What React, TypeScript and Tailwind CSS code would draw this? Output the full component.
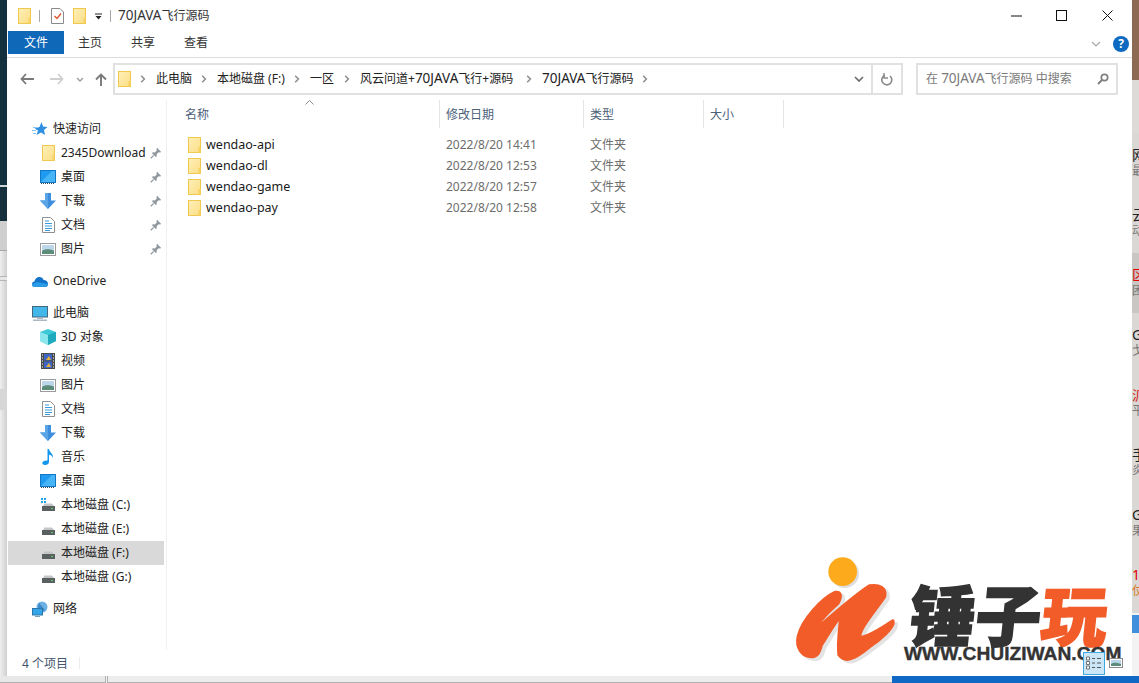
import React from "react";

const Folder = ({ className = "" }: { className?: string }) => (
  <svg width="13" height="16" viewBox="0 0 13 16" className={`shrink-0 ${className}`}>
    <defs>
      <linearGradient id="fg" x1="0" y1="0" x2="1" y2="1">
        <stop offset="0" stopColor="#fff0b8" />
        <stop offset="1" stopColor="#fbdd85" />
      </linearGradient>
    </defs>
    <rect x="0.5" y="0.5" width="12" height="15" fill="url(#fg)" stroke="#efc94f" />
    <rect x="10.5" y="10" width="2" height="5.5" fill="#f5d262" />
  </svg>
);

const Pin = () => (
  <svg width="12" height="12" viewBox="0 0 12 12" className="shrink-0">
    <path d="M7 0.8 11.2 5 10 5.6 8.6 5.2 6.6 7.2 6.8 9.2 5.8 10 2 6.2 2.8 5.2 4.8 5.4 6.8 3.4 6.4 2z" fill="#8f979e" />
    <path d="M3.6 8.4 0.8 11.2" stroke="#8f979e" strokeWidth="1.3" />
  </svg>
);

const Star = () => (
  <svg width="16" height="16" viewBox="0 0 16 16">
    <path d="M9.5 1 11 5.5 15.5 6 12 9 13 14 9 11.5 4.5 14 6 9.5 2.5 7.5 7.5 6z" fill="#2f8fe0" />
    <path d="M1 6.5H5M0 9.5H4M1 12.5H4" stroke="#8cc4ef" strokeWidth="1" />
  </svg>
);
const Desktop = () => (
  <svg width="16" height="14" viewBox="0 0 16 14">
    <rect x="0.5" y="0.5" width="15" height="12" fill="#1e9bf0" stroke="#1277c4" />
    <path d="M1 12 12 1H15V12z" fill="#46b4f6" />
    <path d="M1 13.5H15" stroke="#3c4a56" strokeDasharray="1 1" />
  </svg>
);
const Down = () => (
  <svg width="16" height="16" viewBox="0 0 16 16">
    <path d="M5 0H11V7.5H16L8 16 0 7.5H5z" fill="#3d8fdc" />
    <path d="M5 0H8V16L0 7.5H5z" fill="#5aa5e8" />
  </svg>
);
const Doc = () => (
  <svg width="13" height="16" viewBox="0 0 13 16">
    <path d="M0.5 0.5H8.5L12.5 4.5V15.5H0.5z" fill="#fff" stroke="#8f8f8f" />
    <path d="M3 4H7M3 6.5H10M3 9H10M3 11.5H10M3 13.5H8" stroke="#3a9ad9" strokeWidth="1" />
  </svg>
);
const Pic = () => (
  <svg width="16" height="13" viewBox="0 0 16 13">
    <rect x="0.5" y="0.5" width="15" height="12" fill="#fff" stroke="#9a9a9a" />
    <rect x="2" y="2" width="12" height="9" fill="#bcd6ea" />
    <path d="M2 8C5 5.5 9 6 14 7.5V11H2z" fill="#5d8c78" />
  </svg>
);
const Cloud = () => (
  <svg width="16" height="11" viewBox="0 0 16 11">
    <path d="M3 11C1 11 0 9.6 0 8.2 0 6.8 1 5.8 2.4 5.6 3 3 4.8 1 7.4 1 9.4 1 11 2.2 11.6 4 14 4 16 5.6 16 8 16 9.8 14.8 11 13 11z" fill="#1273c8" />
    <path d="M3 11C1 11 0 9.6 0 8.2L5 6 16 8C16 9.8 14.8 11 13 11z" fill="#2a9be6" />
  </svg>
);
const Monitor = () => (
  <svg width="16" height="15" viewBox="0 0 16 15">
    <rect x="0.5" y="0.5" width="15" height="10.5" fill="#43b7ea" stroke="#44677f" />
    <path d="M5 12H11V13H5zM1 13.5H15V15H1z" fill="#a9b8c2" />
  </svg>
);
const Cube = () => (
  <svg width="16" height="16" viewBox="0 0 16 16">
    <path d="M8 0 16 3V12L8 16 0 12V3z" fill="#3dc8d8" />
    <path d="M0 3 8 6V16L0 12z" fill="#8ae6ec" />
    <path d="M8 6 16 3V12L8 16z" fill="#1faabd" />
  </svg>
);
const Film = () => (
  <svg width="14" height="16" viewBox="0 0 14 16">
    <rect width="14" height="16" fill="#4b4b4b" />
    <rect x="3" y="1" width="8" height="6.5" fill="#3f66c5" />
    <rect x="3" y="8.5" width="8" height="6.5" fill="#3f66c5" />
    <path d="M5 7 8 3 10 7zM5 14 8 10 10 14z" fill="#e8b23a" />
    <path d="M1 2H2M1 5H2M1 8H2M1 11H2M1 14H2M12 2H13M12 5H13M12 8H13M12 11H13M12 14H13" stroke="#fff" />
  </svg>
);
const Music = () => (
  <svg width="12" height="16" viewBox="0 0 12 16">
    <path d="M5.5 0H7C7.2 3 11.5 4.5 11 9 10 6.5 8.5 6 7 5.5V13C7 15 5 16 3 16 1.4 16 0.3 15.2 0.3 14 0.3 12.3 3 11 5.5 11.5z" fill="#1397ea" />
  </svg>
);
const Drive = ({ win = false }: { win?: boolean }) => (
  <svg width="14" height="14" viewBox="0 0 14 14">
    {win && <path d="M0 0H2V2H0zM3 0H5V2H3zM0 3H2V5H0zM3 3H5V5H3z" fill="#1fa4ee" />}
    <path d="M2 8 3.5 5.5H11L13 8z" fill="#c5c5c5" />
    <rect x="1" y="8" width="13" height="5" fill="#5a5f62" />
    <rect x="10" y="10" width="2" height="1" fill="#5cd05c" />
  </svg>
);
const Net = () => (
  <svg width="16" height="16" viewBox="0 0 16 16">
    <circle cx="10" cy="6" r="5.5" fill="#6cb0e4" />
    <path d="M7 2 13 9 9 11 6 6z" fill="#3c86c8" />
    <rect x="0.5" y="7.5" width="10" height="6.5" fill="#33a5e8" stroke="#2c76aa" />
    <path d="M3 15.5H8" stroke="#7aa0ba" />
  </svg>
);
const Chev = () => (
  <svg width="6" height="8" viewBox="0 0 6 8" className="shrink-0">
    <path d="M1.2 0.8 4.4 4 1.2 7.2" fill="none" stroke="#8c8c8c" strokeWidth="1.5" />
  </svg>
);

const J = () => <span className="text-[13.5px]">70JAVA</span>;

type Item = { icon: React.ReactNode; label: string; pin?: boolean; top?: boolean; sel?: boolean };
const groups: Item[][] = [
  [
    { icon: <Star />, label: "快速访问", top: true },
    { icon: <Folder />, label: "2345Download", pin: true },
    { icon: <Desktop />, label: "桌面", pin: true },
    { icon: <Down />, label: "下载", pin: true },
    { icon: <Doc />, label: "文档", pin: true },
    { icon: <Pic />, label: "图片", pin: true },
  ],
  [{ icon: <Cloud />, label: "OneDrive", top: true }],
  [
    { icon: <Monitor />, label: "此电脑", top: true },
    { icon: <Cube />, label: "3D 对象" },
    { icon: <Film />, label: "视频" },
    { icon: <Pic />, label: "图片" },
    { icon: <Doc />, label: "文档" },
    { icon: <Down />, label: "下载" },
    { icon: <Music />, label: "音乐" },
    { icon: <Desktop />, label: "桌面" },
    { icon: <Drive win />, label: "本地磁盘 (C:)" },
    { icon: <Drive />, label: "本地磁盘 (E:)" },
    { icon: <Drive />, label: "本地磁盘 (F:)", sel: true },
    { icon: <Drive />, label: "本地磁盘 (G:)" },
  ],
  [{ icon: <Net />, label: "网络", top: true }],
];

const crumbs = [
  { t: <>此电脑</>, k: "a", w: "w-[45px]" },
  { t: <>本地磁盘 (F:)</>, k: "b", w: "w-[77px]" },
  { t: <>一区</>, k: "c", w: "w-[34px]" },
  { t: <>风云问道+<J />飞行+源码</>, k: "d", w: "w-[166px]" },
  { t: <><J />飞行源码</>, k: "e", w: "w-[100px]" },
];

const files = [
  ["wendao-api", "2022/8/20 14:41"],
  ["wendao-dl", "2022/8/20 12:53"],
  ["wendao-game", "2022/8/20 12:57"],
  ["wendao-pay", "2022/8/20 12:58"],
];

const strip = [
  ["网", "最", "text-[#222]"],
  ["云", "动", "text-[#222]"],
  ["区", "困", "text-[#e00000]"],
  ["G", "戈", "text-[#222]"],
  ["派", "平", "text-[#d01010]"],
  ["手", "炎", "text-[#222]"],
  ["G", "果", "text-[#222]"],
  ["1", "仗", "text-[#e00000]"],
];

const swoosh =
  "M149 119C110 136 50 200 38 250 30 285 50 312 80 310 95 308 100 295 105 275 115 262 140 215 165 185 165 220 155 260 160 305 175 325 195 325 250 280 280 260 325 222 320 205 290 225 240 255 220 255 215 230 265 175 295 130 300 105 280 95 250 100 210 125 130 195 90 230 85 222 110 190 155 150 165 130 165 118 149 119Z";

export default function App() {
  return (
    <div className="relative flex h-[683px] w-[1139px] flex-col overflow-hidden bg-[#e9e9e9] text-[12px] leading-none text-[#1a1a1a] font-['Noto_Sans','Noto_Sans_CJK_SC',sans-serif]">
      <div className="flex h-[676px]">
        {/* left background */}
        <div className="flex w-[7px] flex-col">
          <div className="h-[185px] bg-[#13303f]" />
          <div className="h-[2px] bg-[#cfd4d8]" />
          <div className="h-[34px] bg-[#152f3d]" />
          <div className="h-[29px] bg-[#cfcfcf]" />
          <div className="h-px bg-[#a9a9a9]" />
          <div className="h-[25px] bg-gradient-to-r from-[#efefef] to-[#cfcfcf]" />
          <div className="h-px bg-[#b5b5b5]" />
          <div className="h-[3px] bg-[#e6e6e6]" />
          <div className="h-px bg-[#b5b5b5]" />
          <div className="h-[108px] bg-gradient-to-r from-[#efefef] to-[#cfcfcf]" />
          <div className="h-[21px] bg-[#d6d6d6]" />
          <div className="flex-1 bg-gradient-to-r from-[#efefef] to-[#cfcfcf]" />
        </div>

        {/* window */}
        <div className="flex w-[1125px] flex-col bg-white">
          {/* title bar */}
          <div className="flex h-[31px] items-center">
            <Folder className="ml-[11px]" />
            <div className="ml-[8px] h-[12px] w-px bg-[#a8a8a8]" />
            <svg width="13" height="16" viewBox="0 0 13 16" className="ml-[11px]">
              <path d="M0.5 0.5H9L12.5 4V15.5H0.5z" fill="#fff" stroke="#8a8a8a" />
              <path d="M3.5 8 6 10.5 10 5.5" fill="none" stroke="#e2552c" strokeWidth="1.4" />
            </svg>
            <Folder className="ml-[9px]" />
            <svg width="7" height="7" viewBox="0 0 7 7" className="ml-[9px] mt-[2px]">
              <path d="M0 1H7" stroke="#222" />
              <path d="M0.5 3H6.5L3.5 6.5z" fill="#222" />
            </svg>
            <div className="ml-[8px] h-[12px] w-px bg-[#a8a8a8]" />
            <span className="ml-[7px] text-[#333]"><J />飞行源码</span>
            <div className="ml-auto flex items-center">
              <svg width="11" height="2" viewBox="0 0 11 2"><path d="M0 1H11" stroke="#111" /></svg>
              <svg width="11" height="11" viewBox="0 0 11 11" className="ml-[34px]"><rect x="0.5" y="0.5" width="10" height="10" fill="none" stroke="#111" /></svg>
              <svg width="11" height="11" viewBox="0 0 11 11" className="ml-[35px] mr-[19px]"><path d="M0.5 0.5 10.5 10.5M10.5 0.5 0.5 10.5" stroke="#111" /></svg>
            </div>
          </div>

          {/* ribbon tabs */}
          <div className="flex h-[27px] items-start border-b border-[#dcdcdc]">
            <div className="ml-px flex h-[23px] w-[56px] items-center justify-center bg-[#0f68b8] text-white">文件</div>
            <div className="ml-[14px] flex h-[23px] items-center text-[#333]">主页</div>
            <div className="ml-[29px] flex h-[23px] items-center text-[#333]">共享</div>
            <div className="ml-[29px] flex h-[23px] items-center text-[#333]">查看</div>
            <div className="ml-auto flex h-[26px] items-center pr-[3px]">
              <svg width="10" height="6" viewBox="0 0 10 6"><path d="M1 1 5 5 9 1" fill="none" stroke="#a9a9a9" strokeWidth="1.2" /></svg>
              <div className="ml-[12px] flex h-[16px] w-[16px] items-center justify-center rounded-full bg-[#0d6ac0] text-[12px] font-bold text-white">?</div>
            </div>
          </div>

          {/* address row */}
          <div className="flex h-[42px] items-center">
            <svg width="14" height="12" viewBox="0 0 14 12" className="ml-[13px]"><path d="M6 1 1.5 6 6 11M1.5 6H14" fill="none" stroke="#7a7a7a" strokeWidth="1.8" /></svg>
            <svg width="14" height="12" viewBox="0 0 14 12" className="ml-[16px]"><path d="M8 1 12.5 6 8 11M12.5 6H0" fill="none" stroke="#cfcfcf" strokeWidth="1.8" /></svg>
            <svg width="8" height="5" viewBox="0 0 8 5" className="ml-[12px]"><path d="M1 1 4 4 7 1" fill="none" stroke="#9b9b9b" strokeWidth="1.3" /></svg>
            <svg width="12" height="13" viewBox="0 0 12 13" className="ml-[11px]"><path d="M1 6.5 6 1.5 11 6.5M6 1.5V13" fill="none" stroke="#7a7a7a" strokeWidth="1.9" /></svg>
            <div className="ml-[6px] flex h-[32px] w-[790px] items-center border-2 border-[#e1e1e1] pl-[3px]">
              <Folder className="mr-[9px]" />
              {crumbs.map((c) => (
                <div key={c.k} className="flex items-center">
                  <Chev />
                  <span className={`ml-[10px] ${c.w} whitespace-nowrap text-[#222]`}>{c.t}</span>
                </div>
              ))}
              <Chev />
              <svg width="10" height="6" viewBox="0 0 10 6" className="ml-auto mr-[7px]"><path d="M1 1 5 5 9 1" fill="none" stroke="#6d6d6d" strokeWidth="1.7" /></svg>
              <div className="flex h-full w-[30px] items-center justify-center border-l-2 border-[#e1e1e1]">
                <svg width="12" height="13" viewBox="0 0 12 13"><path d="M4 2.2A5 5 0 1 0 9 3" fill="none" stroke="#8a8a8a" strokeWidth="1.6" /><path d="M3 0V5H7" fill="none" stroke="#8a8a8a" strokeWidth="1.4" /></svg>
              </div>
            </div>
            <div className="ml-[13px] flex h-[32px] w-[202px] items-center justify-between border-2 border-[#e1e1e1] pl-[8px] pr-[7px] text-[#7a7a7a]">
              <span className="whitespace-nowrap">在 <J />飞行源码 中搜索</span>
              <svg width="12" height="12" viewBox="0 0 12 12"><circle cx="7.5" cy="4.5" r="3.2" fill="none" stroke="#808080" strokeWidth="1.7" /><path d="M5 7 1 11" stroke="#808080" strokeWidth="2" /></svg>
            </div>
          </div>

          {/* body */}
          <div className="flex min-h-0 flex-1">
            <div className="w-[160px] shrink-0 border-r border-[#f0f0f0] pb-[40px] pl-px pr-[2px] pt-[17px]">
              {groups.map((g, i) => (
                <div key={i} className="mb-2">
                  {g.map((it) => (
                    <div key={it.label} className={`flex h-6 items-center ${it.top ? "pl-6" : "pl-8"} ${it.sel ? "bg-[#d9d9d9]" : ""}`}>
                      <div className="flex w-4 shrink-0 items-center justify-center">{it.icon}</div>
                      <span className="ml-[5px] whitespace-nowrap text-[#222]">{it.label}</span>
                      {it.pin && <div className="ml-auto mr-[2px]"><Pin /></div>}
                    </div>
                  ))}
                </div>
              ))}
            </div>
            <div className="min-w-0 flex-1">
              <div className="grid h-7 grid-cols-[273px_144px_120px_80px] text-[#4c607a]">
                <div className="relative flex items-center border-r border-[#e5e5e5] pl-[18px] pt-[2px]">
                  名称
                  <svg width="9" height="5" viewBox="0 0 9 5" className="absolute left-[138px] top-[0px]"><path d="M0.5 4.5 4.5 0.5 8.5 4.5" fill="none" stroke="#8a8a8a" /></svg>
                </div>
                <div className="flex items-center border-r border-[#e5e5e5] pl-[6px] pt-[2px]">修改日期</div>
                <div className="flex items-center border-r border-[#e5e5e5] pl-[6px] pt-[2px]">类型</div>
                <div className="flex items-center border-r border-[#e5e5e5] pl-[6px] pt-[2px]">大小</div>
              </div>
              <div className="mt-[6px]">
                {files.map(([n, d]) => (
                  <div key={n} className="grid h-[21px] grid-cols-[273px_144px_120px_80px] items-center">
                    <div className="flex items-center pl-[21px]">
                      <Folder />
                      <span className="ml-[5px] pt-[2px] text-[12.5px] text-[#1a1a1a]">{n}</span>
                    </div>
                    <div className="pl-[6px] text-[#6d6d6d]">{d}</div>
                    <div className="pl-[6px] text-[#6d6d6d]">文件夹</div>
                    <div />
                  </div>
                ))}
              </div>
            </div>
          </div>

          {/* status bar */}
          <div className="relative z-20 flex h-[26px] shrink-0 items-center">
            <span className="ml-[15px] pt-[2px] text-[#44566e]">4 个项目</span>
            <div className="ml-[11px] h-[12px] w-px bg-[#ececec]" />
            <div className="ml-auto flex items-center pr-[9px]">
              <div className="flex h-[23px] w-[22px] items-center justify-center border border-[#3fa8e0] bg-[#cbe6f7]">
                <svg width="16" height="14" viewBox="0 0 16 14">
                  <path d="M0.5 1H3.5V4H0.5zM0.5 5.5H3.5V8.5H0.5zM0.5 10H3.5V13H0.5z" fill="#fff" stroke="#555" strokeWidth="0.8" />
                  <path d="M6 2.5H9M11 2.5H15M6 7H9M11 7H15M6 11.5H9M11 11.5H15" stroke="#555" />
                </svg>
              </div>
              <svg width="14" height="10" viewBox="0 0 14 10" className="ml-[4px]">
                <rect x="0.5" y="0.5" width="13" height="9" fill="#fff" stroke="#8a8a8a" />
                <rect x="2" y="2" width="10" height="6" fill="#b9d5e9" />
                <path d="M2 6C5 4 8 5 12 6V8H2z" fill="#5e8c7a" />
              </svg>
            </div>
          </div>
        </div>

        {/* right background */}
        <div className="flex w-[7px] flex-col overflow-hidden">
          <div className="h-[80px] shrink-0 bg-[#8d6b52]" />
          <div className="h-[53px] shrink-0 bg-[#dcdbd8]" />
          {strip.map(([a, b, c], i) => (
            <div key={i} className={`flex h-[60px] shrink-0 flex-col gap-[3px] pt-[15px] text-[14px] ${i === 2 ? "bg-[#c9c7c4]" : "bg-[#dad8d5]"}`}>
              <span className={`${c} whitespace-nowrap`}>{a}</span>
              <span className={`text-[12px] whitespace-nowrap ${i === 7 ? "text-[#d87a2a]" : "text-[#777]"}`}>{b}</span>
            </div>
          ))}
          <div className="h-[2px] shrink-0 bg-[#f3f3f3]" />
          <div className="h-[18px] shrink-0 bg-[#3f8fdc]" />
          <div className="flex-1 bg-[#f3f3f3]" />
        </div>
      </div>

      {/* bottom background */}
      <div className="flex h-[7px]">
        <div className="flex w-[892px]">
          <div className="w-[105px] border-b border-[#b0b0b0] bg-[#e8e8e8]" />
          <div className="w-[3px] border-x border-[#b0b0b0] bg-[#f2f2f2]" />
          <div className="flex-1 border-b border-[#b0b0b0] bg-[#ededed]" />
        </div>
        <div className="flex-1 bg-[#0f69c4]" />
      </div>

      {/* watermark */}
      <div className="absolute left-[797px] top-[555px] z-10 h-[112px] w-[335px]">
        <svg width="120" height="113" viewBox="0 0 360 339" className="absolute left-[-11px] top-[-2px]">
          <circle cx="176" cy="62" r="43" fill="#dedede" />
          <circle cx="170" cy="56" r="43" fill="#fdaa1c" />
          <path transform="translate(10 8)" d={swoosh} fill="#e3e3e3" stroke="#e3e3e3" strokeWidth="12" strokeLinejoin="round" />
          <path d={swoosh} fill="#f25c29" stroke="#f25c29" strokeWidth="12" strokeLinejoin="round" />
        </svg>
        <div className="absolute left-[113px] top-[24px] flex -skew-x-6 whitespace-nowrap text-[66px] font-black leading-none font-['Noto_Sans_CJK_SC',sans-serif]">
          <span className="text-[#333] [-webkit-text-stroke:1.5px_#333]">锤子</span>
          <span className="text-[#f25c29] [-webkit-text-stroke:1.5px_#f25c29]">玩</span>
        </div>
        <div className="absolute left-[107px] top-[89px] whitespace-nowrap text-[19.2px] font-bold leading-none text-[#333] [-webkit-text-stroke:0.4px_#333] font-['Liberation_Sans',sans-serif]">
          WWW.CHUIZIWAN.COM
        </div>
      </div>
    </div>
  );
}
